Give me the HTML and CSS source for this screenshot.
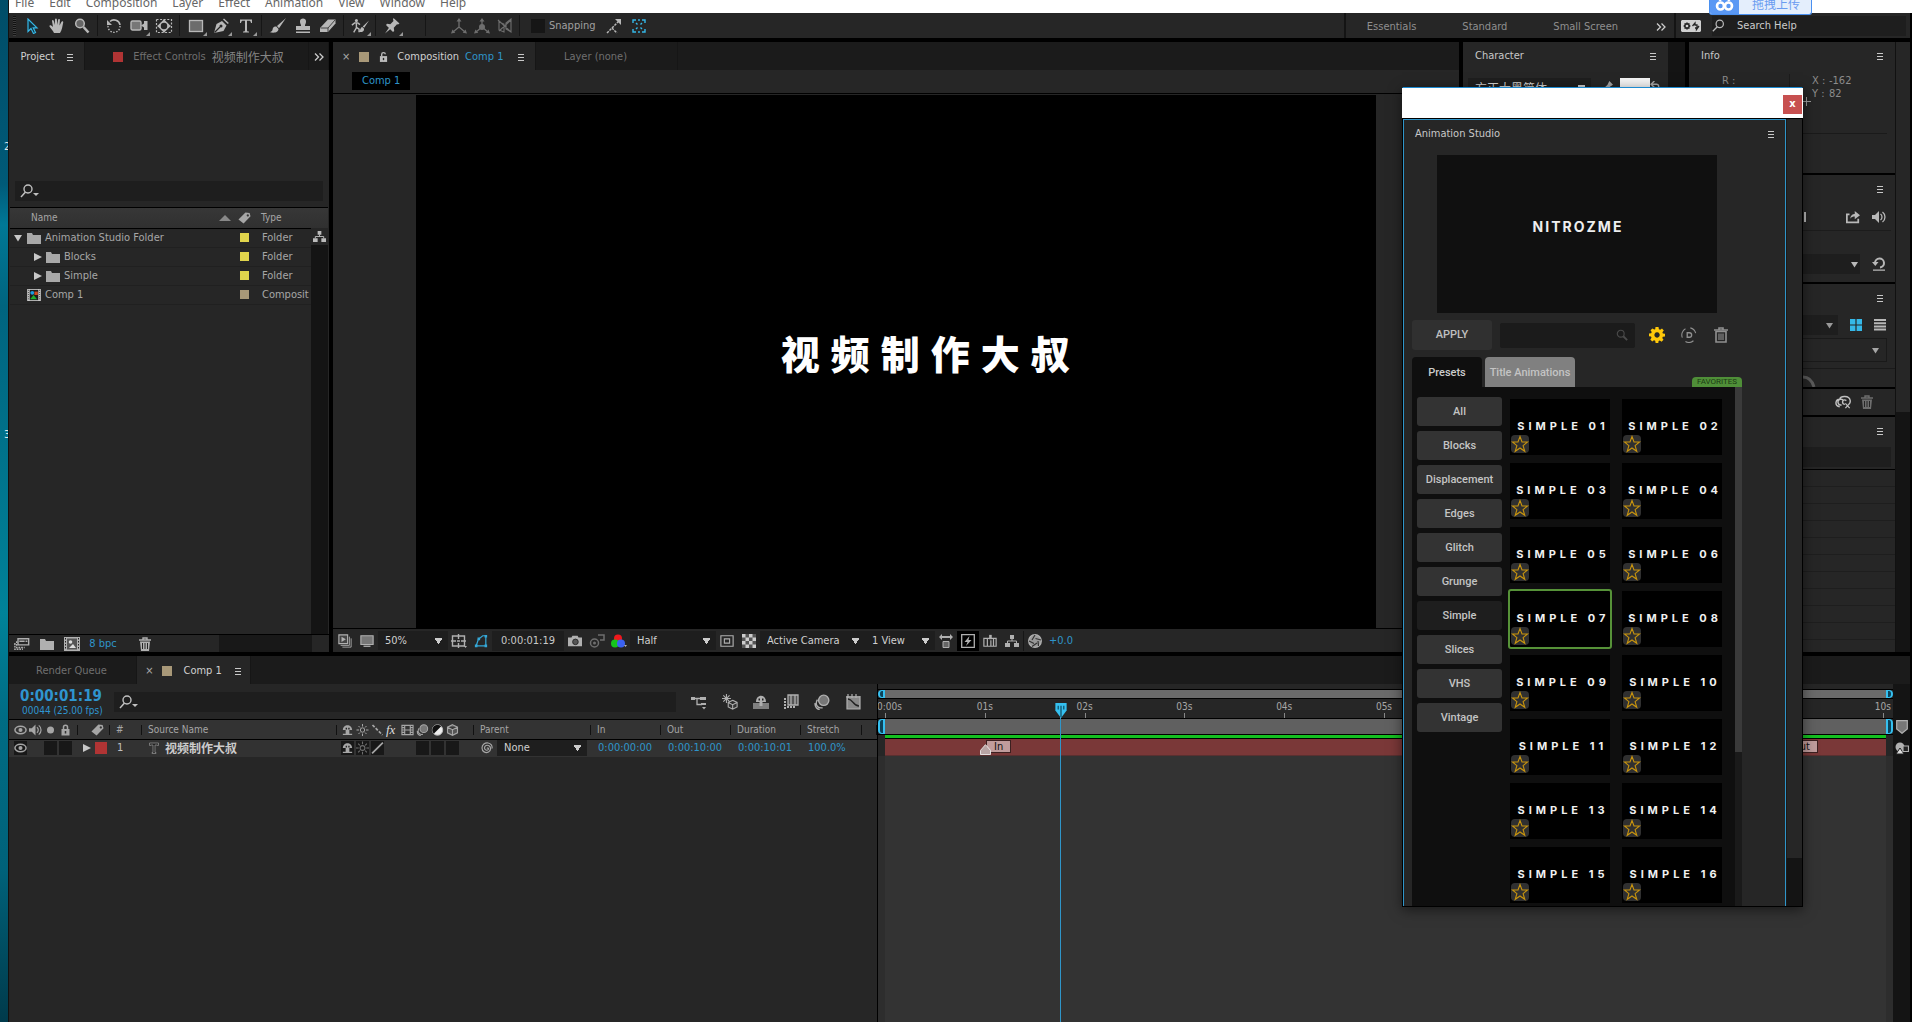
FILE: index.html
```html
<!DOCTYPE html>
<html lang="en">
<head>
    <meta charset="UTF-8">
    <meta name="viewport" content="width=device-width, initial-scale=1.0">
    <title>Composition Editor</title>
    <link rel="stylesheet" href="styles.css">
</head>
<body>
    <!-- Icon sprite -->
    <svg class="sprite" xmlns="http://www.w3.org/2000/svg">
        <symbol id="i-menu" viewBox="0 0 8 8"><path d="M1 1.500h6M1 4.500h6M1 7.500h6" stroke="currentColor" fill="none"/></symbol>
        <symbol id="i-select" viewBox="0 0 16 16"><path d="M4 1v12.500l3-3 2.500 5 2-1-2.300-4.700H13z" fill="#10303c" stroke="#35b8e8" stroke-width="1.200"/></symbol>
        <symbol id="i-hand" viewBox="0 0 16 16"><path d="M5 15c-.5-2-3.500-4.500-4.500-6.500C.3 7 2 6.800 4 9L3 3c0-1.200 1.500-1.200 1.800 0l1 4L6 1.500c.1-1.300 1.800-1.300 1.900 0L8.200 7l.9-5.200c.2-1.200 1.900-1 1.800.3L10.500 7.500l2-3.800c.6-1.100 2-.4 1.700.7C13.500 7.500 13.200 12 11 15z"/></symbol>
        <symbol id="i-zoom" viewBox="0 0 16 16"><circle cx="6" cy="5.500" r="4.300" fill="#666" stroke="currentColor" stroke-width="1.500"/><path d="M9.500 9l5 5.500" stroke="currentColor" stroke-width="2.600"/></symbol>
        <symbol id="i-rotate" viewBox="0 0 16 16"><path d="M4 3.500A6 6 0 0 1 14 7" fill="none" stroke="currentColor" stroke-width="1.600"/><path d="M14 8A6 6 0 1 1 2.500 6" fill="none" stroke="currentColor" stroke-width="1.400" stroke-dasharray="1.500 1.500"/><path d="M1 2v5h5z"/></symbol>
        <symbol id="i-camera" viewBox="0 0 18 14"><rect x="1" y="2" width="10" height="9" rx="1.500" fill="#777" stroke="currentColor" stroke-width="1.400"/><path d="M11 6.500l3-2V2h3.500v9H14V8.500z"/></symbol>
        <symbol id="i-panbehind" viewBox="0 0 18 16"><rect x="1.500" y="1.500" width="15" height="13" fill="none" stroke="currentColor" stroke-width="1.200" stroke-dasharray="2 1.600"/><circle cx="9" cy="8" r="4" fill="none" stroke="currentColor" stroke-width="1.600"/><path d="M9 1l2.500 3h-5zM9 15l2.500-3h-5zM2 8l3-2.500v5zM16 8l-3-2.500v5z"/></symbol>
        <symbol id="i-rect" viewBox="0 0 16 16"><rect x="1.500" y="2.500" width="13" height="11" fill="#6c6c6c" stroke="currentColor" stroke-width="1.300"/></symbol>
        <symbol id="i-pen" viewBox="0 0 16 16"><path d="M1 15l2.500-9L9 3l4.500 4.500-3 5.500z"/><path d="M10 1.500L14.800 6l1-1L11 .5z"/><path d="M1.500 14.500L7 9" stroke="#262626" stroke-width="1.200"/><circle cx="8" cy="8" r="1.500" fill="#262626"/></symbol>
        <symbol id="i-type" viewBox="0 0 16 16"><path d="M2 1.500h12V5h-1c-.2-1.600-.8-2.200-2.400-2.200H9V12c0 1.200.4 1.400 2 1.500v1H5v-1c1.600-.1 2-.3 2-1.500V2.800H5.400C3.800 2.800 3.200 3.400 3 5H2z"/></symbol>
        <symbol id="i-brush" viewBox="0 0 18 16"><path d="M17 0L8 8l2 2.200zM7.300 8.600C5 8 3.500 10 3.500 12 3 13.500 1.500 14 .5 14c4 1.500 9 .5 9-3z"/></symbol>
        <symbol id="i-stamp" viewBox="0 0 16 16"><path d="M6 7C5 5 5 4 5 3.200 5 1.500 6.300.5 8 .5s3 1 3 2.700C11 4 11 5 10 7v1h5v4H1V8h5zM1 13.500h14V15H1z"/></symbol>
        <symbol id="i-eraser" viewBox="0 0 16 16"><path d="M0 10l8-8.500h7.500v4L8 14H0z"/><path d="M.5 10H8l7-8M8 10v4" fill="none" stroke="#444"/></symbol>
        <symbol id="i-roto" viewBox="0 0 20 16"><circle cx="6" cy="2" r="1.700"/><path d="M1 7l3-2.500h3.500l2.500 2M6 5v5l-3 5M6 9.500l3 2V15" fill="none" stroke="currentColor" stroke-width="1.600"/><path d="M20 2l-7 6.500 1.700 1.500zM12.500 9c-2 0-2 4-4 5.500 3 .8 6.500 0 6-3.500z"/></symbol>
        <symbol id="i-pin" viewBox="0 0 16 16"><path d="M9.500 0l6 5.500-1.500 1-1-.3-3.200 3.500.4 3.300-1.200 1L2 7l1-1.200 3.300.4L9.500 3 9 1.500zM5.500 9L7 10.500 1 15.500z"/></symbol>
        <symbol id="i-axis" viewBox="0 0 16 16"><path d="M8 2v7M8 9l-6 5M8 9l6 5" fill="none" stroke="currentColor" stroke-width="1.300"/><path d="M8 0l2.500 3.500h-5zM0 15.500l1.500-4 2.800 3.200zM16 15.500l-1.500-4-2.800 3.200z"/></symbol>
        <symbol id="i-axis2" viewBox="0 0 16 16"><path d="M8 2v7M8 9l-6 5M8 9l6 5" fill="none" stroke="currentColor" stroke-width="1.300"/><path d="M8 0l2.500 3.500h-5zM0 15.500l1.500-4 2.800 3.200zM16 15.500l-1.500-4-2.800 3.200z"/><circle cx="8" cy="9" r="3"/></symbol>
        <symbol id="i-axis3" viewBox="0 0 16 16"><path d="M1 2l13 12M14 1v13L9 11V5zM2 4v8l5 2V6zM14 2L2 13" fill="none" stroke="currentColor" stroke-width="1.100"/></symbol>
        <symbol id="i-snap" viewBox="0 0 16 16"><path d="M1 15l5-5 5 5M6 10l7-7" fill="none" stroke="currentColor" stroke-width="1.500" stroke-dasharray="2.500 1"/><path d="M9 1h6v6z"/></symbol>
        <symbol id="i-snapbox" viewBox="0 0 16 16"><path d="M2 5V2h3M11 2h3v3M14 11v3h-3M5 14H2v-3M5 5l1.500 1.500M11 5L9.500 6.500M5 11l1.500-1.500M11 11L9.500 9.500M8 1v2M8 13v2" fill="none" stroke="#35b8e8" stroke-width="1.400"/></symbol>
        <symbol id="i-chevrons" viewBox="0 0 10 8"><path d="M1 .5L4.500 4 1 7.500M5.500.5L9 4 5.500 7.500" fill="none" stroke="currentColor" stroke-width="1.300"/></symbol>
        <symbol id="i-sync" viewBox="0 0 20 12"><path fill-rule="evenodd" d="M1 0h18l1 1v10l-1 1H1l-1-1V1zM6 2L5 3.300 3.500 3v1.500L2.300 6l1.200 1.500V9L5 8.700 6 10l1-1.300L8.500 9V7.500L9.700 6 8.500 4.500V3L7 3.300z"/><circle cx="6" cy="6" r="1.300"/><path d="M11.500 6l2.500-3v2h2v3M18 6l-2.500 3.500V8H14" fill="none" stroke="#262626" stroke-width="1.300"/></symbol>
        <symbol id="i-search" viewBox="0 0 16 16"><circle cx="9.500" cy="6" r="4.500" fill="none" stroke="currentColor" stroke-width="1.500"/><path d="M6.500 9.500L1 15" stroke="currentColor" stroke-width="1.600"/></symbol>
        <symbol id="i-searchdd" viewBox="0 0 20 14"><circle cx="8" cy="5" r="4" fill="none" stroke="currentColor" stroke-width="1.400"/><path d="M5.500 8L1 13" stroke="currentColor" stroke-width="1.500"/><path d="M13 9h6l-3 3z"/></symbol>
        <symbol id="i-lens" viewBox="0 0 14 14"><circle cx="5.500" cy="5.500" r="4" fill="none" stroke="currentColor" stroke-width="1.300"/><path d="M8.500 8.500L13 13" stroke="currentColor" stroke-width="2.200"/></symbol>
        <symbol id="i-lockopen" viewBox="0 0 10 12"><path d="M1 5h8v6.500H1z"/><path d="M3 5V3c0-2.500 4-2.500 4 0" fill="none" stroke="currentColor" stroke-width="1.500"/><path d="M5 7v2.500" stroke="#262626" stroke-width="1.500"/></symbol>
        <symbol id="i-lock" viewBox="0 0 10 12"><path d="M1 5h8v6.500H1z"/><path d="M3 5V3c0-2.500 4-2.500 4 0v2" fill="none" stroke="currentColor" stroke-width="1.500"/><path d="M5 7v2.500" stroke="#333" stroke-width="1.500"/></symbol>
        <symbol id="i-tag" viewBox="0 0 14 12"><path fill-rule="evenodd" d="M8 0l4.500.5 1 3.500L6 12 .5 7.500zM10.500 2a1.200 1.200 0 1 0 .1 0z"/></symbol>
        <symbol id="i-tridown" viewBox="0 0 8 8"><path d="M0 1h8L4 7.500z"/></symbol>
        <symbol id="i-triright" viewBox="0 0 8 8"><path d="M0 0l8 4-8 4z"/></symbol>
        <symbol id="i-triup" viewBox="0 0 12 6"><path d="M0 6l6-6 6 6z"/></symbol>
        <symbol id="i-folder" viewBox="0 0 14 12"><path d="M0 1h5l1 2h8v9H0z"/></symbol>
        <symbol id="i-comp" viewBox="0 0 16 14"><path d="M0 0h16v14H0z" fill="#c8c8c8"/><path d="M3 1h10v12H3z" fill="#1b1b1b"/><path d="M1.500 1v12M14.500 1v12" stroke="#222" stroke-dasharray="1 1.500"/><circle cx="6" cy="4.500" r="2.300" fill="#1b9be0"/><path d="M8.500 3h4v4h-4z" fill="#cc4a20"/><path d="M3.500 12l4-5 4 5z" fill="#1fae2c"/></symbol>
        <symbol id="i-flow" viewBox="0 0 14 12"><path d="M5 0h4v4H5zM0 8h5v4H0zM9 8h5v4H9z"/><path d="M7 4v2M2.500 8V6h9v2" fill="none" stroke="currentColor"/></symbol>
        <symbol id="i-interpret" viewBox="0 0 18 14"><path d="M4.500 1h12v7h-12zM6 4h6M13 4h2" fill="none" stroke="currentColor" stroke-width="1.600"/><path d="M3 4v7h9M1 6v7h9" fill="none" stroke="currentColor" stroke-width="1.600" stroke-dasharray="2 1"/></symbol>
        <symbol id="i-newcomp" viewBox="0 0 16 14"><path d="M0 0h16v14H0z"/><path d="M3 1.500h10v11H3z" fill="#555"/><path d="M1.500 1v12M14.500 1v12" stroke="#222" stroke-dasharray="1.500 1.500"/><circle cx="6.500" cy="5" r="1.800" fill="#ddd"/><path d="M5 11l4-4 3 4z" fill="#ddd"/></symbol>
        <symbol id="i-trash" viewBox="0 0 12 14"><path d="M0 3h12M4 2.500V1h4v1.500" fill="none" stroke="currentColor" stroke-width="1.400"/><path fill-rule="evenodd" d="M1 4.500h10L10 14H2zM3 6v6h1V6zM5.500 6v6h1V6zM8 6v6h1V6z"/></symbol>
        <symbol id="i-trashbox" viewBox="0 0 14 16"><path d="M0 3h14M5 2.500V1h4v1.500" fill="none" stroke="currentColor" stroke-width="1.600"/><path d="M2 4.500h10V15H2z" fill="none" stroke="currentColor" stroke-width="1.600"/><path d="M5 6.500V13M7 6.500V13M9 6.500V13" stroke="currentColor" stroke-width="1.100"/></symbol>
        <symbol id="i-always" viewBox="0 0 16 16"><path d="M1 1h10v10H1z" fill="#444" stroke="currentColor" stroke-width="1.300"/><path d="M3 13h10V3M5 15h10V5" fill="none" stroke="currentColor"/><path d="M4 3l5 3-5 3z"/></symbol>
        <symbol id="i-monitor" viewBox="0 0 16 14"><path d="M1 1h14v10H1z" fill="#777" stroke="currentColor" stroke-width="1.300"/><path d="M4 13h8" stroke="currentColor" stroke-width="1.500"/></symbol>
        <symbol id="i-guides" viewBox="0 0 16 14"><path d="M1.500 2h12v10h-12zM7.500 0v5M7.500 9v5M0 7h5M10 7h5M6 7h3" fill="none" stroke="currentColor" stroke-width="1.400"/><path d="M13 12h3l-1.500 2z"/></symbol>
        <symbol id="i-mask" viewBox="0 0 16 16"><path d="M2.500 13.500L5 6l5-4h3.500v11.500z" fill="none" stroke="#35a8d8" stroke-width="1.400"/><path d="M1 12h3v3H1zM12 12h3v3h-3zM12 1h3v3h-3zM4 4h3v3H4z" fill="#35a8d8"/></symbol>
        <symbol id="i-photo" viewBox="0 0 16 14"><path d="M0 3h4l1-2h6l1 2h4v10H0z"/><circle cx="8.500" cy="8" r="3.200" fill="#555" stroke="#222"/></symbol>
        <symbol id="i-showsnap" viewBox="0 0 16 14"><circle cx="5.500" cy="9" r="4" fill="none" stroke="currentColor" stroke-width="1.500"/><circle cx="5.500" cy="9" r="1.500"/><path d="M9 1h6v5h-4" fill="none" stroke="currentColor" stroke-width="1.500"/></symbol>
        <symbol id="i-rgb" viewBox="0 0 16 14"><circle cx="7" cy="4.500" r="4" fill="#f0181c"/><circle cx="4" cy="9.500" r="4" fill="#16c41c"/><circle cx="10" cy="9.500" r="4" fill="#3b62f2"/><path d="M13 11h3l-1.500 2z"/></symbol>
        <symbol id="i-roi" viewBox="0 0 16 14"><path d="M1 1h14v12H1zM5 4.500h6v5H5z" fill="none" stroke="currentColor" stroke-width="1.300"/></symbol>
        <symbol id="i-checker" viewBox="0 0 14 14"><path d="M0 0h14v14H0z" fill="#555"/><path d="M0 0h3.500v3.500H0zM7 0h3.500v3.500H7zM3.500 3.500H7V7H3.500zM10.500 3.500H14V7h-3.500zM0 7h3.500v3.500H0zM7 7h3.500v3.500H7zM3.500 10.500H7V14H3.500zM10.500 10.500H14V14h-3.500z" fill="#ccc"/></symbol>
        <symbol id="i-aspect" viewBox="0 0 14 14"><path d="M0 3l3-3v2h8V0l3 3-3 3V4H3v2z"/><path d="M4 7.500h6v6H4z" fill="#666" stroke="currentColor"/></symbol>
        <symbol id="i-fast" viewBox="0 0 14 14"><path d="M.7.7h12.600v12.600H.7z" fill="none" stroke="currentColor" stroke-width="1.300"/><path d="M8.500 2L3.500 8h3L5 12l5.500-6h-3z"/></symbol>
        <symbol id="i-timeline" viewBox="0 0 16 14"><path d="M1 4h14v9H1zM5 4v9M9 6v7M12 4v9" fill="none" stroke="currentColor" stroke-width="1.400"/><path d="M7 0h3v5H7z"/></symbol>
        <symbol id="i-aperture" viewBox="0 0 14 14"><circle cx="7" cy="7" r="6.300" fill="#999" stroke="currentColor" stroke-width="1.300"/><path d="M7 1L4 6M13 6L7.500 4.500M10.500 12L10 7M4 12.500L9 9M1 7l5 2.500" stroke="#333" stroke-width="1.200"/></symbol>
        <symbol id="i-eye" viewBox="0 0 14 10"><ellipse cx="7" cy="5" rx="6" ry="4" fill="none" stroke="currentColor" stroke-width="1.600"/><circle cx="7" cy="5" r="2.200"/></symbol>
        <symbol id="i-speaker" viewBox="0 0 14 12"><path d="M0 4h3l4-4v12L3 8H0z"/><path d="M8.500 3c2 1.500 2 4.500 0 6M10.500 1c3.300 2.500 3.300 7.500 0 10" fill="none" stroke="currentColor" stroke-width="1.300"/></symbol>
        <symbol id="i-dot" viewBox="0 0 8 8"><circle cx="4" cy="4" r="3.500"/></symbol>
        <symbol id="i-shy" viewBox="0 0 14 12"><path d="M2 6C2-1 12-1 12 6H9v4h3v1.500H2V10h3V6z"/><path d="M5 3.500h1.500v2H5zM7.800 3.500h1.500v2H7.800z" fill="#222"/></symbol>
        <symbol id="i-sun" viewBox="0 0 12 12"><circle cx="6" cy="6" r="2.200" fill="none" stroke="currentColor"/><path d="M6 0v2.500M6 9.500V12M0 6h2.500M9.500 6H12M2 2l1.500 1.500M8.500 8.500L10 10M10 2L8.500 3.500M3.500 8.500L2 10" stroke="currentColor"/></symbol>
        <symbol id="i-quality" viewBox="0 0 12 12"><path d="M1 1l10 10" stroke="currentColor" stroke-width="1.700" stroke-dasharray="3 1.500"/></symbol>
        <symbol id="i-slash" viewBox="0 0 12 12"><path d="M1 11L11 1" stroke="currentColor" stroke-width="1.600"/></symbol>
        <symbol id="i-film" viewBox="0 0 14 12"><path d="M1 1h12v10H1zM4 1v10M10 1v10M4 6h6M1 3.500h3M1 6h3M1 8.500h3M10 3.500h3M10 6h3M10 8.500h3" fill="none" stroke="currentColor" stroke-width="1.200"/></symbol>
        <symbol id="i-blur" viewBox="0 0 14 14"><circle cx="8.500" cy="5.500" r="4.500" fill="#777" stroke="currentColor" stroke-width="1.200"/><path d="M3 5C.5 9 3 13 7.500 12M1 8c-.5 3.500 2 5.500 4 5.500" fill="none" stroke="currentColor" stroke-width="1.200"/></symbol>
        <symbol id="i-adjust" viewBox="0 0 12 12"><circle cx="6" cy="6" r="5.200" fill="#eee" stroke="#bbb"/><path d="M2.300 9.700A5.200 5.200 0 0 1 9.700 2.300z" fill="#111"/></symbol>
        <symbol id="i-cube" viewBox="0 0 12 12"><path d="M6 .7l5 2.500v5.600l-5 2.500-5-2.500V3.200zM1 3.200l5 2.500 5-2.500M6 5.700v5.600" fill="#555" stroke="currentColor" stroke-width="1.100"/></symbol>
        <symbol id="i-swirl" viewBox="0 0 12 12"><path d="M6 6.500c.8-1.300 2 0 1.200 1C6 9 3.500 8 3.500 6 3.500 3.500 6 2.700 8 3.700c2.300 1.300 2 5-.5 6.300C4.500 11.500 1 9.500 1 6 1 2.500 4 .7 7 1c3 .3 4.500 3 4 5.500" fill="none" stroke="currentColor" stroke-width="1.200"/></symbol>
        <symbol id="i-branch" viewBox="0 0 16 16"><path d="M0 3h4v3H0zM9 3h6v3H9zM10 9h5v2h-5z"/><path d="M3 4.500h6M6 4.500v6h5" fill="none" stroke="currentColor" stroke-width="1.300"/><path d="M11 13h4l-2 2.500z"/></symbol>
        <symbol id="i-draft3d" viewBox="0 0 18 18"><path d="M5 0v10M0 5h10M1.500 1.500l7 7M8.500 1.500l-7 7" stroke="currentColor" stroke-width="1.200"/><path d="M12 7l5 2.500v5L12 17l-5-2.500v-5zM7 9.500l5 2.500 5-2.500M12 12v5" fill="#333" stroke="currentColor" stroke-width="1.200"/></symbol>
        <symbol id="i-hideshy" viewBox="0 0 16 16"><path d="M0 9h16v6H0z" fill="#808080"/><path d="M3 8C3-.5 13-.5 13 8H9.500v4h-3V8z"/><path d="M5.500 4.500h1.500v2H5.500zM9 4.500h1.500v2H9z" fill="#222"/></symbol>
        <symbol id="i-frames" viewBox="0 0 16 16"><path d="M5 1h10v10H5zM8 1v10M12 1v10" fill="#555" stroke="currentColor" stroke-width="1.300"/><path d="M2 4v11M4 13h8" fill="none" stroke="currentColor" stroke-width="2" stroke-dasharray="2 1"/></symbol>
        <symbol id="i-graph" viewBox="0 0 16 16"><path d="M2 2h13v13H2z" fill="#888"/><path d="M1 3h14M3 0v4M7 0v4M11 0v4M2 2v13h13V2" fill="none" stroke="currentColor" stroke-width="1.200"/><path d="M3 5c5 0 5 7 11 7" fill="none" stroke="#222" stroke-width="1.300"/></symbol>
        <symbol id="i-text" viewBox="0 0 10 12"><path d="M.5 1h9v2.500h-1V3H6v7.500h1v1H3v-1h1V3H1.500v.5h-1z" fill="#222" stroke="#8a8a8a" stroke-width=".8"/></symbol>
        <symbol id="i-share" viewBox="0 0 16 14"><path d="M4 4H1v9h13V9" fill="none" stroke="currentColor" stroke-width="2"/><path d="M5 9c0-4 3-5.500 5-5.500V0l6 5-6 4.500V6.500C8 6.500 6 7 5 9z"/></symbol>
        <symbol id="i-reset" viewBox="0 0 14 14"><path d="M3 6a4.500 4.500 0 1 1 5 4.500" fill="none" stroke="currentColor" stroke-width="2"/><path d="M0 5h6.500L3.300 9zM1 12.500h12v1.300H1z"/></symbol>
        <symbol id="i-grid" viewBox="0 0 12 12"><path d="M0 0h5.400v5.400H0zM6.600 0H12v5.400H6.600zM0 6.600h5.400V12H0zM6.600 6.600H12V12H6.600z"/></symbol>
        <symbol id="i-list" viewBox="0 0 12 12"><path d="M0 0h12v2H0zM0 3.200h12v2H0zM0 6.400h12v2H0zM0 9.600h12v2H0z"/></symbol>
        <symbol id="i-swirlx" viewBox="0 0 18 14"><path d="M9 6a3 3 0 1 0-2 4M5 12C-1 11 .5 4 5 4c1-4 10-4 11 1 .5 2 0 3-1 4M12 5.500C10 4 8 5 8 7c0 1.500 1 2.500 2.500 2.500" fill="none" stroke="currentColor" stroke-width="1.500"/><path d="M11 8.500l4.500 5M15.500 8.500l-4.500 5" stroke="currentColor" stroke-width="1.300"/></symbol>
        <symbol id="i-gear" viewBox="0 0 16 16"><path fill-rule="evenodd" d="M6.500 0h3l.4 2.200 1.300.5L13 1.500 14.800 3.400 13.400 5.200l.5 1.300L16 6.800v2.600l-2.200.4-.5 1.200 1.200 1.800-1.900 1.900-1.800-1.300-1.200.5L9.300 16H6.600l-.4-2.200-1.200-.5-1.800 1.200-1.900-1.900 1.200-1.800L2 9.600 0 9.200V6.600l2.200-.4.5-1.200L1.500 3.200l1.900-1.800 1.800 1.200 1-.4zM8 5.300a2.700 2.700 0 1 0 .1 0z"/></symbol>
        <symbol id="i-dcircle" viewBox="0 0 18 18"><path d="M10.500 1A8 8 0 0 1 16.500 7M1.500 12A8 8 0 0 1 5 2M5 16.300a8 8 0 0 0 9-.8" fill="none" stroke="currentColor" stroke-width="1.200"/><path d="M7 6.500h2.500c3.300 0 3.300 5 0 5H7z" fill="none" stroke="currentColor" stroke-width="1.500"/></symbol>
        <symbol id="i-star" viewBox="0 0 18 18"><path d="M9 1.500l2 5.500h5.500l-4.400 3.600 1.700 5.700L9 13l-4.800 3.300 1.700-5.700L1.500 7H7z" fill="none" stroke="#c8940e" stroke-width="1.100"/></symbol>
        <symbol id="i-dropper" viewBox="0 0 12 12"><path d="M8 0l4 4-3 2L3 12l-3 0 1-3 5-5z"/></symbol>
        <symbol id="i-swap" viewBox="0 0 10 10"><path d="M1 3h5c2 0 2 1 2 6M4 0L1 3l3 3" fill="none" stroke="currentColor" stroke-width="1.300"/></symbol>
        <symbol id="i-cross" viewBox="0 0 10 10"><path d="M5 0v10M0 5h10" stroke="currentColor"/></symbol>
        <symbol id="i-step" viewBox="0 0 10 10"><path d="M0 5l5-4v8zM7 0h2v10H7z"/></symbol>
        <symbol id="i-shield" viewBox="0 0 12 14"><path d="M.7.7h10.600V9L6 13.300.7 9z" fill="#777" stroke="currentColor" stroke-width="1.200"/></symbol>
        <symbol id="i-bin" viewBox="0 0 14 12"><circle cx="5" cy="5" r="4.500"/><path d="M1 12l4-6 4 6z" fill="#ddd" stroke="#222"/><path d="M8 4h5.500v5.500H8z" fill="#222" stroke="currentColor" stroke-width="1.200"/></symbol>
        <symbol id="i-arc" viewBox="0 0 14 12"><path d="M0 2c5 0 9 3 11 10" fill="none" stroke="currentColor" stroke-width="3"/></symbol>
        <symbol id="i-head" viewBox="0 0 12 16"><path d="M0 0h12v8l-6 8-6-8z" fill="#35c0f0"/><path d="M3 3v4M6 3v12M9 3v4" stroke="#0c4258" stroke-width="1.200"/></symbol>
        <symbol id="i-marker" viewBox="0 0 12 12"><path d="M.5 11.500V7L6 .7 11.500 7v4.500z" fill="#b8a4a4" stroke="#eee"/></symbol>
        <symbol id="i-cloud" viewBox="0 0 20 16"><circle cx="6" cy="8" r="3.500" fill="none" stroke="#fff" stroke-width="2.600"/><circle cx="14" cy="8" r="3.500" fill="none" stroke="#fff" stroke-width="2.600"/><path d="M5 3a6 6 0 0 1 10 0" fill="none" stroke="#fff" stroke-width="2"/></symbol>
    </svg>

    <aside class="desktop"><span>2</span><span>3</span></aside>

    <div class="app">
        <nav class="menubar">
            <a href="#">File</a><a href="#">Edit</a><a href="#">Composition</a><a href="#">Layer</a><a href="#">Effect</a><a href="#">Animation</a><a href="#">View</a><a href="#">Window</a><a href="#">Help</a>
        </nav>

        <header class="toolbar">
            <span class="grip"></span>
            <button class="tool" aria-label="Selection"><svg><use href="#i-select"/></svg></button>
            <button class="tool" aria-label="Hand"><svg><use href="#i-hand"/></svg></button>
            <button class="tool" aria-label="Zoom"><svg><use href="#i-zoom"/></svg></button>
            <i class="sep"></i>
            <button class="tool" aria-label="Rotate"><svg><use href="#i-rotate"/></svg></button>
            <button class="tool more wide-icon" aria-label="Camera"><svg><use href="#i-camera"/></svg></button>
            <button class="tool wide-icon" aria-label="Pan behind"><svg><use href="#i-panbehind"/></svg></button>
            <i class="sep"></i>
            <button class="tool more" aria-label="Shape"><svg><use href="#i-rect"/></svg></button>
            <button class="tool more" aria-label="Pen"><svg><use href="#i-pen"/></svg></button>
            <button class="tool more" aria-label="Type"><svg><use href="#i-type"/></svg></button>
            <i class="sep"></i>
            <button class="tool wide-icon" aria-label="Brush"><svg><use href="#i-brush"/></svg></button>
            <button class="tool" aria-label="Clone"><svg><use href="#i-stamp"/></svg></button>
            <button class="tool" aria-label="Eraser"><svg><use href="#i-eraser"/></svg></button>
            <i class="sep"></i>
            <button class="tool more wide-icon" aria-label="Roto brush"><svg><use href="#i-roto"/></svg></button>
            <i class="sep"></i>
            <button class="tool more" aria-label="Puppet pin"><svg><use href="#i-pin"/></svg></button>
            <i class="sep wide"></i>
            <button class="tool dim" aria-label="Local axis"><svg><use href="#i-axis"/></svg></button>
            <button class="tool dim" aria-label="World axis"><svg><use href="#i-axis2"/></svg></button>
            <button class="tool dim" aria-label="View axis"><svg><use href="#i-axis3"/></svg></button>
            <i class="sep"></i>
            <label class="snapping"><input type="checkbox"> Snapping</label>
            <button class="tool" aria-label="Snap edges"><svg><use href="#i-snap"/></svg></button>
            <button class="tool" aria-label="Snap features"><svg><use href="#i-snapbox"/></svg></button>
            <div class="workspaces">
                <button>Essentials</button>
                <button>Standard</button>
                <button>Small Screen</button>
                <button class="more-ws" aria-label="More workspaces"><svg><use href="#i-chevrons"/></svg></button>
            </div>
            <button class="sync" aria-label="Sync settings"><svg><use href="#i-sync"/></svg></button>
            <label class="help"><svg><use href="#i-search"/></svg><input type="text" placeholder="Search Help"></label>
        </header>

        <main class="panels">
            <section class="panel project">
                <div class="tabs">
                    <button class="tab active">Project <svg class="menu"><use href="#i-menu"/></svg></button>
                    <button class="tab effects"><i class="chip red"></i>Effect Controls <span class="cjk">视频制作大叔</span></button>
                    <button class="tab chevrons" aria-label="More tabs"><svg><use href="#i-chevrons"/></svg></button>
                </div>
                <div class="project-space"></div>
                <label class="searchbox"><svg><use href="#i-searchdd"/></svg><input type="text" aria-label="Search project"></label>
                <div class="project-list">
                    <table>
                        <thead>
                            <tr><th class="c-name">Name <svg><use href="#i-triup"/></svg></th><th class="c-tag"><svg><use href="#i-tag"/></svg></th><th class="c-type">Type</th></tr>
                        </thead>
                        <tbody>
                            <tr><td class="lvl0"><svg class="tri"><use href="#i-tridown"/></svg><svg class="fold"><use href="#i-folder"/></svg>Animation Studio Folder</td><td><i class="label yellow"></i></td><td>Folder</td></tr>
                            <tr><td class="lvl1"><svg class="tri"><use href="#i-triright"/></svg><svg class="fold"><use href="#i-folder"/></svg>Blocks</td><td><i class="label yellow"></i></td><td>Folder</td></tr>
                            <tr><td class="lvl1"><svg class="tri"><use href="#i-triright"/></svg><svg class="fold"><use href="#i-folder"/></svg>Simple</td><td><i class="label yellow"></i></td><td>Folder</td></tr>
                            <tr><td class="lvl0"><i class="tri"></i><svg class="fold"><use href="#i-comp"/></svg>Comp 1</td><td><i class="label tan"></i></td><td>Composit</td></tr>
                        </tbody>
                    </table>
                    <div class="vscroll"><svg><use href="#i-flow"/></svg></div>
                </div>
                <div class="project-foot">
                    <button aria-label="Interpret footage"><svg class="big"><use href="#i-interpret"/></svg></button>
                    <button aria-label="New folder"><svg><use href="#i-folder"/></svg></button>
                    <button aria-label="New composition"><svg class="big"><use href="#i-newcomp"/></svg></button>
                    <button class="bpc">8 bpc</button>
                    <button aria-label="Delete"><svg><use href="#i-trash"/></svg></button>
                    <div class="hscroll"><i></i></div>
                </div>
            </section>

            <section class="panel comp">
                <div class="tabs">
                    <button class="tab active comp-tab"><span class="x">×</span><i class="chip tan"></i><svg class="lock"><use href="#i-lockopen"/></svg>Composition <b>Comp 1</b><svg class="menu"><use href="#i-menu"/></svg></button>
                    <button class="tab layer-tab">Layer (none)</button>
                </div>
                <div class="crumbs"><a href="#">Comp 1</a></div>
                <div class="viewer">
                    <div class="canvas"><p class="title-layer">视频制作大叔</p></div>
                </div>
                <div class="viewer-foot">
                    <button aria-label="Always preview"><svg><use href="#i-always"/></svg></button>
                    <button aria-label="Primary viewer"><svg><use href="#i-monitor"/></svg></button>
                    <select class="s-mag" aria-label="Magnification"><option>50%</option></select>
                    <button aria-label="Guides"><svg class="big"><use href="#i-guides"/></svg></button>
                    <button aria-label="Masks"><svg><use href="#i-mask"/></svg></button>
                    <button class="timecode">0:00:01:19</button>
                    <button aria-label="Snapshot"><svg><use href="#i-photo"/></svg></button>
                    <button class="dim" aria-label="Show snapshot"><svg class="big"><use href="#i-showsnap"/></svg></button>
                    <button aria-label="Channels"><svg class="big"><use href="#i-rgb"/></svg></button>
                    <select class="s-res" aria-label="Resolution"><option>Half</option></select>
                    <button aria-label="Region"><svg><use href="#i-roi"/></svg></button>
                    <button aria-label="Transparency grid"><svg><use href="#i-checker"/></svg></button>
                    <select class="s-cam" aria-label="Camera"><option>Active Camera</option></select>
                    <select class="s-view" aria-label="Views"><option>1 View</option></select>
                    <button aria-label="Pixel aspect"><svg><use href="#i-aspect"/></svg></button>
                    <button class="pressed" aria-label="Fast previews"><svg><use href="#i-fast"/></svg></button>
                    <button aria-label="Timeline"><svg><use href="#i-timeline"/></svg></button>
                    <button aria-label="Flowchart"><svg><use href="#i-flow"/></svg></button>
                    <button class="exposure" aria-label="Exposure"><svg><use href="#i-aperture"/></svg></button>
                    <span class="blue">+0.0</span>
                </div>
            </section>

            <section class="side character">
                <div class="panel">
                    <div class="panel-title">Character <svg class="menu"><use href="#i-menu"/></svg></div>
                    <div class="font-row">
                        <select class="cjk" aria-label="Font"><option>方正大黑简体</option></select>
                        <svg><use href="#i-dropper"/></svg><i class="swatch"></i><svg><use href="#i-swap"/></svg>
                    </div>
                </div>
                <div class="track"></div>
            </section>

            <section class="side right">
                <div class="stack">
                    <div class="panel info">
                        <div class="panel-title">Info <svg class="menu"><use href="#i-menu"/></svg></div>
                        <div class="info-grid">
                            <span class="rgb">R :</span>
                            <dl><dt>X :</dt><dd>-162</dd><dt>Y :</dt><dd>82</dd></dl>
                        </div>
                        <svg class="cross"><use href="#i-cross"/></svg>
                    </div>
                    <div class="panel preview">
                        <div class="panel-title"><svg class="menu"><use href="#i-menu"/></svg></div>
                        <div class="line-row transport"><svg><use href="#i-step"/></svg><svg class="push"><use href="#i-share"/></svg><svg><use href="#i-speaker"/></svg></div>
                        <div class="line-row"><span class="drop"><svg><use href="#i-tridown"/></svg></span><svg><use href="#i-reset"/></svg></div>
                    </div>
                    <div class="panel presets">
                        <div class="panel-title"><svg class="menu"><use href="#i-menu"/></svg></div>
                        <div class="line-row views"><span class="drop"><svg><use href="#i-tridown"/></svg></span><svg class="on"><use href="#i-grid"/></svg><svg><use href="#i-list"/></svg></div>
                        <div class="boxed"><svg><use href="#i-tridown"/></svg></div>
                        <div class="arc-row"><svg><use href="#i-arc"/></svg></div>
                    </div>
                    <div class="panel buttons"><svg><use href="#i-swirlx"/></svg><svg class="dim"><use href="#i-trash"/></svg></div>
                    <div class="panel effects-list">
                        <div class="panel-title"><svg class="menu"><use href="#i-menu"/></svg></div>
                        <input type="text" aria-label="Search effects">
                        <div class="lines"></div>
                    </div>
                </div>
                <div class="track"><i></i></div>
            </section>
        </main>

        <section class="timeline">
            <div class="tabs">
                <button class="tab queue-tab">Render Queue</button>
                <button class="tab active time-tab"><span class="x">×</span><i class="chip tan"></i>Comp 1 <svg class="menu"><use href="#i-menu"/></svg></button>
            </div>
            <div class="time-body">
                <div class="layers">
                    <div class="time-tools">
                        <div class="clock"><strong>0:00:01:19</strong><small>00044 (25.00 fps)</small></div>
                        <label class="searchbox"><svg><use href="#i-searchdd"/></svg><input type="text" aria-label="Search layers"></label>
                        <div class="switches">
                            <svg><use href="#i-branch"/></svg><svg><use href="#i-draft3d"/></svg><svg><use href="#i-hideshy"/></svg><svg><use href="#i-frames"/></svg><svg><use href="#i-blur"/></svg><svg><use href="#i-graph"/></svg>
                        </div>
                    </div>
                    <table class="layer-table">
                        <colgroup><col class="w-av"><col class="w-tag"><col class="w-num"><col class="w-name"><col class="w-sw"><col class="w-parent"><col class="w-time"><col class="w-time"><col class="w-time"><col class="w-stretch"><col></colgroup>
                        <thead>
                            <tr>
                                <th><div class="cells"><svg><use href="#i-eye"/></svg><svg><use href="#i-speaker"/></svg><svg class="small"><use href="#i-dot"/></svg><svg><use href="#i-lock"/></svg></div></th>
                                <th class="right"><svg><use href="#i-tag"/></svg></th><th>#</th><th>Source Name</th>
                                <th><div class="cells"><svg><use href="#i-shy"/></svg><svg><use href="#i-sun"/></svg><svg><use href="#i-quality"/></svg><em>fx</em><svg><use href="#i-film"/></svg><svg><use href="#i-blur"/></svg><svg><use href="#i-adjust"/></svg><svg><use href="#i-cube"/></svg></div></th>
                                <th>Parent</th><th>In</th><th>Out</th><th>Duration</th><th>Stretch</th><th></th>
                            </tr>
                        </thead>
                        <tbody>
                            <tr>
                                <td><div class="cells"><svg class="well"><use href="#i-eye"/></svg><i></i><i class="well"></i><i class="well"></i></div></td>
                                <td class="right"><div class="twirl"><svg class="tri"><use href="#i-triright"/></svg><i class="label red"></i></div></td><td class="num">1</td>
                                <td class="layer-name"><svg><use href="#i-text"/></svg><span class="cjk">视频制作大叔</span></td>
                                <td><div class="cells"><svg class="well"><use href="#i-shy"/></svg><svg class="well dim"><use href="#i-sun"/></svg><svg class="well"><use href="#i-slash"/></svg><i></i><i></i><i class="well"></i><i class="well"></i><i class="well"></i></div></td>
                                <td class="parent"><svg><use href="#i-swirl"/></svg><select aria-label="Parent"><option>None</option></select></td>
                                <td class="blue">0:00:00:00</td><td class="blue">0:00:10:00</td><td class="blue">0:00:10:01</td><td class="blue">100.0%</td><td></td>
                            </tr>
                        </tbody>
                    </table>
                </div>
                <div class="graph">
                    <div class="navigator"><i class="handle"></i><i class="bar"></i><i class="handle end"></i></div>
                    <div class="ruler"><span>0:00s</span><span>01s</span><span>02s</span><span>03s</span><span>04s</span><span>05s</span><span>06s</span><span>07s</span><span>08s</span><span>09s</span><span>10s</span></div>
                    <div class="workarea"><i class="handle"></i><i class="bar"></i><i class="handle end"></i></div>
                    <div class="cached"></div>
                    <div class="layer-bar"></div>
                    <div class="rest"></div>
                    <div class="overlay">
                        <div class="marker m-in"><svg><use href="#i-marker"/></svg><span>In</span></div>
                        <div class="marker m-out"><svg><use href="#i-marker"/></svg><span>Out</span></div>
                        <div class="playhead"><svg><use href="#i-head"/></svg></div>
                    </div>
                </div>
                <div class="gutter"><svg><use href="#i-shield"/></svg><svg><use href="#i-bin"/></svg></div>
            </div>
        </section>
    </div>

    <div class="upload"><svg><use href="#i-cloud"/></svg><span class="cjk">拖拽上传</span></div>

    <!-- Floating Animation Studio window -->
    <div class="studio">
        <div class="studio-bar"><button aria-label="Close">x</button></div>
        <div class="studio-body">
            <div class="studio-main">
                <div class="panel-title">Animation Studio <svg class="menu"><use href="#i-menu"/></svg></div>
                <div class="brand">NITROZME</div>
                <div class="controls">
                    <button class="apply">APPLY</button>
                    <label class="find"><input type="text" aria-label="Search presets"><svg><use href="#i-lens"/></svg></label>
                    <button class="tool gear" aria-label="Settings"><svg><use href="#i-gear"/></svg></button>
                    <button class="tool" aria-label="Duration"><svg><use href="#i-dcircle"/></svg></button>
                    <button class="tool" aria-label="Remove"><svg><use href="#i-trashbox"/></svg></button>
                </div>
                <div class="studio-tabs">
                    <button class="on">Presets</button>
                    <button>Title Animations</button>
                    <button class="fav">FAVORITES</button>
                </div>
                <div class="library">
                    <div class="cats">
                        <button>All</button>
                        <button>Blocks</button>
                        <button>Displacement</button>
                        <button>Edges</button>
                        <button>Glitch</button>
                        <button>Grunge</button>
                        <button class="on">Simple</button>
                        <button>Slices</button>
                        <button>VHS</button>
                        <button>Vintage</button>
                    </div>
                    <div class="cards">
                        <div class="card">SIMPLE 01<svg><use href="#i-star"/></svg></div>
                        <div class="card">SIMPLE 02<svg><use href="#i-star"/></svg></div>
                        <div class="card">SIMPLE 03<svg><use href="#i-star"/></svg></div>
                        <div class="card">SIMPLE 04<svg><use href="#i-star"/></svg></div>
                        <div class="card">SIMPLE 05<svg><use href="#i-star"/></svg></div>
                        <div class="card">SIMPLE 06<svg><use href="#i-star"/></svg></div>
                        <div class="card picked">SIMPLE 07<svg><use href="#i-star"/></svg></div>
                        <div class="card">SIMPLE 08<svg><use href="#i-star"/></svg></div>
                        <div class="card">SIMPLE 09<svg><use href="#i-star"/></svg></div>
                        <div class="card">SIMPLE 10<svg><use href="#i-star"/></svg></div>
                        <div class="card">SIMPLE 11<svg><use href="#i-star"/></svg></div>
                        <div class="card">SIMPLE 12<svg><use href="#i-star"/></svg></div>
                        <div class="card">SIMPLE 13<svg><use href="#i-star"/></svg></div>
                        <div class="card">SIMPLE 14<svg><use href="#i-star"/></svg></div>
                        <div class="card">SIMPLE 15<svg><use href="#i-star"/></svg></div>
                        <div class="card">SIMPLE 16<svg><use href="#i-star"/></svg></div>
                    </div>
                    <div class="lib-scroll"><i></i></div>
                </div>
            </div>
            <div class="studio-scroll"><i></i></div>
        </div>
    </div>
</body>
</html>
```
FILE: styles.css
```css
* {
    box-sizing: border-box;
}
body {
    margin: 0;
    height: 100vh;
    overflow: hidden;
    display: flex;
    position: relative;
    background: #000;
    color: #a6a6a6;
    font-family: "DejaVu Sans Condensed", "Noto Sans", "Noto Sans CJK SC", sans-serif;
    font-size: 11px;
    line-height: 14px;
}
button, input, select {
    font: inherit;
    color: inherit;
    background: none;
    border: 0;
    padding: 0;
    margin: 0;
    outline: none;
}
button {
    display: flex;
    align-items: center;
    justify-content: center;
    white-space: nowrap;
}
a {
    color: inherit;
    text-decoration: none;
}
i {
    display: block;
    font-style: normal;
}
svg {
    display: block;
    width: 14px;
    height: 14px;
    flex: none;
    fill: currentColor;
}
select {
    appearance: none;
    height: 19px;
    padding-left: 7px;
    color: #d0d0d0;
    background: #1e1e1e conic-gradient(from -34deg at 50% 100%, #ccc 0 68deg, transparent 0) no-repeat;
    background-size: 9px 6px;
    background-position: right 5px center;
}
.sprite {
    position: absolute;
    width: 0;
    height: 0;
}
.cjk {
    font-family: "Noto Sans CJK SC", sans-serif;
}
.blue {
    color: #2f95c9;
}
.dim {
    color: #6e6e6e;
}
.big {
    width: 16px;
}

/* Desktop edge */
.desktop {
    width: 9px;
    flex: none;
    padding-top: 140px;
    overflow: hidden;
    display: flex;
    flex-direction: column;
    align-items: flex-start;
    padding-left: 4px;
    gap: 274px;
    color: #dfe8ea;
    border-right: 1px solid #111;
    background: linear-gradient(#004d68, #005a78 18%, #007896 22%, #00647f 30%, #008299 60%, #006c84 70%, #00627a 85%, #003a4b);
}
.app {
    flex: 1;
    min-width: 0;
    padding-right: 2px;
    display: grid;
    grid-template-rows: 13px 25px minmax(0, 1fr) 366px;
    grid-template-columns: minmax(0, 1fr);
}

/* Menu and tools */
.menubar {
    background: #fff;
    color: #666;
    font-family: "Noto Sans", sans-serif;
    font-size: 12px;
    line-height: 14px;
    display: flex;
    align-items: flex-end;
    gap: 15px;
    padding: 0 0 3px 6px;
    overflow: hidden;
    margin-right: -2px;
}
.toolbar {
    background: #262626;
    display: flex;
    align-items: center;
    color: #b8b8b8;
    min-width: 0;
}
.grip {
    width: 3px;
    height: 20px;
    margin: 0 3px 0 4px;
    background: repeating-linear-gradient(#111 0 1px, #3c3c3c 1px 2px);
}
.tool {
    width: 25px;
    height: 23px;
    position: relative;
}
.tool svg {
    width: 16px;
    height: 16px;
}
.wide-icon svg {
    width: 18px;
}
.tool.more::after {
    content: "";
    position: absolute;
    right: 1px;
    bottom: 1px;
    border: 2px solid transparent;
    border-right-color: #999;
    border-bottom-color: #999;
}
.tool.dim {
    width: 23px;
}
.sep {
    width: 1px;
    height: 21px;
    margin: 0 3px;
    background: #161616;
}
.sep.wide {
    margin: 0 21px;
}
.snapping {
    display: flex;
    align-items: center;
    gap: 4px;
    margin: 0 6px 0 8px;
    color: #a0a0a0;
}
.snapping input {
    appearance: none;
    width: 14px;
    height: 14px;
    background: #161616;
}
.workspaces {
    margin-left: auto;
    height: 25px;
    display: flex;
    align-items: center;
    gap: 46px;
    padding: 2px 8px 0 21px;
    border-left: 2px solid #141414;
    border-right: 2px solid #141414;
    color: #8f8f8f;
}
.more-ws svg {
    width: 10px;
    height: 8px;
    color: #ccc;
}
.more-ws {
    margin-left: -8px;
}
.sync {
    margin: 0 11px 0 5px;
    color: #d0d0d0;
}
.sync svg {
    width: 20px;
    height: 12px;
}
.help {
    width: 194px;
    height: 20px;
    background: #1e1e1e;
    margin-right: 4px;
    display: flex;
    align-items: center;
    gap: 12px;
}
.help svg {
    width: 13px;
    height: 13px;
}
.help input {
    width: 150px;
}
.help input::placeholder {
    color: #ccc;
    opacity: 1;
}

/* Panels */
.panels {
    margin: 4px 0;
    display: grid;
    grid-template-columns: 320px minmax(0, 1fr) 222px 221px;
    grid-template-rows: minmax(0, 1fr);
    gap: 4px;
    min-height: 0;
}
.panel {
    background: #262626;
    min-width: 0;
}
.tabs {
    height: 28px;
    background: #1b1b1b;
    display: flex;
    flex: none;
}
.tab {
    color: #6f6f6f;
    padding-top: 2px;
    border-right: 1px solid #161616;
}
.tab.active {
    background: #262626;
    color: #d0d0d0;
}
.menu {
    width: 8px;
    height: 8px;
    color: #c8c8c8;
}
.chip {
    width: 10px;
    height: 10px;
}
.red {
    background: #b03434;
}
.tan {
    background: #a89878;
}
.yellow {
    background: #e0d44c;
}
.x {
    font-size: 11px;
    color: #aaa;
}
.project, .comp {
    display: flex;
    flex-direction: column;
    min-height: 0;
}
.project .tab.active {
    width: 76px;
    gap: 12px;
    padding-left: 2px;
}
.effects {
    flex: 1;
    gap: 6px;
    padding-left: 4px;
}
.effects .chip {
    margin-right: 4px;
}
.effects .cjk {
    font-size: 12px;
    color: #858585;
}
.chevrons {
    width: 20px;
    color: #ccc;
}
.chevrons svg {
    width: 10px;
    height: 8px;
}
.project-space {
    height: 111px;
}
.searchbox {
    height: 20px;
    margin: 0 6px;
    padding-left: 5px;
    background: #1e1e1e;
    display: flex;
    align-items: center;
    color: #c0c0c0;
}
.searchbox svg {
    width: 20px;
}
.searchbox input {
    width: 100%;
}
.project-list {
    flex: 1;
    margin: 6px 1px 0;
    border-top: 1px solid #000;
    display: flex;
    position: relative;
    overflow: hidden;
}
table {
    border-collapse: collapse;
    table-layout: fixed;
}
.project-list table {
    width: 318px;
    height: 96px;
    flex: none;
}
th {
    font-weight: normal;
    text-align: left;
    padding: 0;
    white-space: nowrap;
}
td {
    padding: 0;
    white-space: nowrap;
}
.project-list th {
    height: 20px;
    background: linear-gradient(#373737, #303030);
    border-bottom: 1px solid #000;
    font-size: 10px;
}
.project-list td {
    height: 19px;
    border-bottom: 1px solid #202020;
}
.c-name {
    width: 224px;
}
.project-list .c-name {
    padding-left: 21px;
}
.c-name svg {
    float: right;
    width: 12px;
    height: 6px;
    margin: 4px 3px 0 0;
    color: #888;
}
.c-tag {
    width: 21px;
}
.c-tag svg, .layer-table th.right svg {
    width: 13px;
    height: 12px;
    margin: 0 auto;
}
.project-list .c-type {
    padding-left: 6px;
}
.project-list td:last-child {
    padding-left: 7px;
}
.project-list td svg, .project-list td .tri {
    display: inline-block;
    vertical-align: middle;
}
.tri {
    width: 8px;
    height: 8px;
    color: #c8c8c8;
}
.lvl0 .tri {
    margin: 0 5px 0 4px;
}
.lvl1 .tri {
    margin: 0 4px 0 24px;
}
.fold {
    width: 14px;
    height: 12px;
    margin-right: 4px;
    color: #a8a8a8;
}
.label {
    width: 9px;
    height: 9px;
    margin: 0 auto;
}
.vscroll {
    position: absolute;
    right: 0;
    top: 20px;
    bottom: 0;
    width: 17px;
    background: #141414;
}
.vscroll svg {
    width: 17px;
    height: 17px;
    padding: 2px;
    background: #262626;
    color: #bbb;
}
.project-foot {
    height: 18px;
    border-top: 1px solid #000;
    display: flex;
    align-items: center;
    color: #b0b0b0;
}
.project-foot button {
    width: 25px;
}
.project-foot .bpc {
    width: 48px;
    color: #2f95c9;
    padding-right: 10px;
}
.hscroll {
    flex: 1;
    height: 17px;
    margin-left: 4px;
    margin-right: 17px;
    background: #181818;
}
.hscroll i {
    width: 58px;
    height: 17px;
    background: #262626;
}

/* Composition viewer */
.comp-tab {
    width: 203px;
    justify-content: flex-start;
    padding-left: 9px;
}
.comp-tab .chip {
    margin: 0 10px 0 9px;
}
.comp-tab .lock {
    width: 9px;
    height: 12px;
    margin-right: 9px;
    color: #bbb;
}
.comp-tab b {
    font-weight: normal;
    color: #2f95c9;
    margin: 0 14px 0 6px;
}
.layer-tab {
    width: 142px;
    padding-right: 22px;
}
.crumbs {
    height: 24px;
    padding: 2px 19px 0;
    border-bottom: 1px solid #000;
}
.crumbs a {
    display: inline-block;
    background: #000;
    color: #2f95c9;
    line-height: 18px;
    padding: 0 10px;
}
.viewer {
    flex: 1;
    padding-top: 1px;
    display: flex;
    justify-content: center;
    min-height: 0;
    border-bottom: 1px solid #000;
}
.canvas {
    width: 960px;
    background: #000;
    position: relative;
}
.title-layer {
    position: absolute;
    left: 38%;
    top: 45%;
    margin: 0;
    color: #fff;
    font: 900 39px/34px "Noto Sans CJK SC", sans-serif;
    letter-spacing: 11px;
    white-space: nowrap;
}
.viewer-foot {
    height: 23px;
    padding-left: 1px;
    display: flex;
    align-items: center;
    color: #b0b0b0;
}
.viewer-foot button {
    width: 22px;
    height: 20px;
    flex: none;
}
.viewer-foot .dim {
    color: #6e6e6e;
}
.viewer-foot .timecode {
    width: 72px;
    background: #1e1e1e;
    color: #c8c8c8;
}
.viewer-foot .pressed {
    background: #000;
}
.viewer-foot .exposure {
    border-left: 1px solid #161616;
    margin-right: 4px;
}
.s-mag {
    width: 70px;
}
.s-res {
    width: 86px;
}
.s-cam {
    width: 105px;
}
.s-view {
    width: 70px;
}

/* Right hand columns */
.side {
    display: flex;
    min-width: 0;
    min-height: 0;
}
.panel-title {
    height: 28px;
    padding: 0 11px 0 12px;
    display: flex;
    align-items: center;
    justify-content: space-between;
    color: #c8c8c8;
}
.panel-title .menu {
    margin-left: auto;
}
.character .panel {
    width: 205px;
}
.track {
    flex: 1;
    background: #141414;
}
.font-row {
    display: flex;
    align-items: flex-start;
    padding: 8px 5px;
}
.font-row select {
    width: 123px;
    font-size: 12px;
}
.font-row svg {
    width: 11px;
    height: 11px;
    margin: 3px 0 0 11px;
}
.font-row .swatch {
    width: 30px;
    height: 22px;
    margin-left: 7px;
    background: #f4f4f4;
}
.font-row svg:last-child {
    margin-left: 0;
}
.stack {
    width: 206px;
    flex: none;
    display: flex;
    flex-direction: column;
    gap: 2px;
}
.right .track {
    border-left: 1px solid #111;
}
.right .track i {
    height: 370px;
    background: #262626;
}
.info {
    height: 131px;
    position: relative;
}
.info-grid {
    display: flex;
    height: 64px;
    margin-right: 8px;
    padding: 4px 0 0 33px;
    border-bottom: 1px solid #1a1a1a;
    color: #8c8c8c;
}
.rgb {
    width: 68px;
    height: 40px;
    border-right: 1px solid #1c1c1c;
}
dl {
    display: grid;
    grid-template-columns: 17px auto;
    grid-auto-rows: 13px;
    line-height: 13px;
    margin: 0 0 0 22px;
}
dd {
    margin: 0;
}
.cross {
    position: absolute;
    left: 113px;
    top: 55px;
    width: 9px;
    height: 9px;
}
.preview {
    height: 107px;
}
.line-row {
    display: flex;
    align-items: center;
    justify-content: flex-end;
    gap: 12px;
    height: 28px;
    margin: 0 4px;
    padding-right: 5px;
    color: #b8b8b8;
}
.transport {
    border-bottom: 1px solid #1c1c1c;
    margin-bottom: 19px;
    padding-left: 104px;
}
.transport svg:first-child {
    width: 10px;
    height: 10px;
}
.push {
    margin-left: auto;
}
.drop {
    flex: 1;
    height: 20px;
    background: #1e1e1e;
    display: flex;
    align-items: center;
    justify-content: flex-end;
    padding-right: 1px;
}
.line-row .drop svg, .boxed svg {
    width: 9px;
    height: 7px;
}
.presets {
    height: 103px;
}
.views {
    height: 26px;
}
.views .drop {
    padding-right: 4px;
    color: #999;
}
.views svg {
    width: 12px;
    height: 12px;
}
.views .on {
    color: #35b8e8;
}
.boxed {
    height: 24px;
    margin: 0 8px 0 4px;
    border: 1px solid #1a1a1a;
    display: flex;
    align-items: center;
    justify-content: flex-end;
    padding-right: 6px;
}
.arc-row {
    margin-top: 6px;
    padding: 6px 0 0 114px;
    border-top: 1px solid #1a1a1a;
    color: #5c5c5c;
}
.arc-row svg {
    width: 14px;
    height: 12px;
}
.buttons {
    height: 26px;
    display: flex;
    align-items: center;
    justify-content: flex-end;
    gap: 8px;
    padding-right: 21px;
    color: #c0c0c0;
}
.buttons svg:first-child {
    width: 17px;
}
.effects-list {
    flex: 1;
    display: flex;
    flex-direction: column;
}
.effects-list input {
    height: 20px;
    margin: 2px 4px;
    background: #1e1e1e;
}
.lines {
    flex: 1;
    border-top: 1px solid #000;
    background: repeating-linear-gradient(transparent 0 16px, #1e1e1e 16px 17px);
}

/* Timeline */
.timeline {
    display: flex;
    flex-direction: column;
    min-height: 0;
    position: relative;
    background: #262626;
}
.queue-tab {
    width: 128px;
    padding-right: 2px;
}
.time-tab {
    width: 114px;
}
.time-tab .chip {
    margin: 0 11px 0 9px;
}
.time-tab .menu {
    margin-left: 12px;
}
.time-body {
    flex: 1;
    display: flex;
    min-height: 0;
}
.layers {
    width: 868px;
    flex: none;
}
.time-tools {
    height: 35px;
    display: flex;
    align-items: center;
}
.clock {
    width: 99px;
    padding-left: 11px;
    color: #2f95d0;
}
.clock strong {
    display: block;
    font-size: 15px;
    line-height: 18px;
}
.clock small {
    display: block;
    font-size: 10px;
    line-height: 12px;
    padding-left: 2px;
    white-space: nowrap;
}
.time-tools .searchbox {
    width: 562px;
}
.switches {
    flex: 1;
    display: flex;
    justify-content: space-between;
    padding: 0 16px 0 9px;
    color: #b0b0b0;
}
.switches svg {
    width: 16px;
    height: 16px;
}
.layer-table {
    width: 100%;
    border-top: 1px solid #000;
}
.w-av {
    width: 69px;
}
.w-tag, .w-num {
    width: 32px;
}
.w-name {
    width: 195px;
}
.w-sw {
    width: 137px;
}
.w-parent {
    width: 117px;
}
.w-time {
    width: 70px;
}
.w-stretch {
    width: 61px;
}
.layer-table th {
    height: 20px;
    padding: 1px 0 0 6px;
    font-size: 10px;
    background: linear-gradient(90deg, transparent calc(100% - 1px), #111 0) center / 100% 10px no-repeat, #333;
    border-bottom: 1px solid #000;
}
.layer-table td {
    height: 17px;
    padding-left: 7px;
    background: #323232;
}
.layer-table th:first-child, .layer-table td:first-child {
    padding-left: 5px;
}
.layer-table td:nth-child(5), .layer-table th:nth-child(5) {
    padding-left: 4px;
}
.layer-table td.right {
    padding-left: 5px;
}
.twirl {
    display: flex;
    align-items: center;
    gap: 4px;
}
.twirl .label {
    width: 12px;
    height: 12px;
    margin: 0;
}
.cells {
    display: flex;
    align-items: center;
    gap: 2px;
}
.cells svg, .cells i, .cells em {
    width: 13px;
    height: 12px;
}
.cells em {
    font: italic 13px/12px "Liberation Serif", serif;
    color: #ddd;
}
.cells .small {
    height: 8px;
}
.cells .well {
    height: 14px;
    background: #181818;
}
.num {
    color: #c0c0c0;
}
.layer-name {
    color: #ccc;
}
.layer-name svg, .parent svg {
    display: inline-block;
    vertical-align: middle;
    width: 10px;
    height: 12px;
    margin-right: 6px;
}
.layer-name .cjk {
    font-size: 12px;
    font-weight: bold;
    line-height: 16px;
    vertical-align: middle;
}
.parent svg {
    width: 12px;
    margin-right: 4px;
}
.parent select {
    width: 90px;
    height: 16px;
    vertical-align: middle;
}

/* Time graph */
.graph {
    flex: 1;
    min-width: 0;
    position: relative;
    isolation: isolate;
    padding-top: 5px;
    border-left: 1px solid #000;
    display: flex;
    flex-direction: column;
}
.navigator, .workarea {
    display: flex;
    height: 10px;
    border-top: 1px solid #000;
    border-bottom: 1px solid #000;
}
.workarea {
    height: 17px;
}
.bar {
    flex: 1;
    background: #6a6a6a;
}
.workarea .bar {
    background: #606060;
}
.handle {
    width: 7px;
    border: 1px solid #35c0f0;
    border-width: 1px 2px;
    border-radius: 4px 0 0 4px;
    background: #0c4258;
}
.handle.end {
    border-radius: 0 4px 4px 0;
}
.ruler {
    height: 19px;
    padding-left: 7px;
    display: flex;
    overflow: hidden;
    font-size: 10px;
    line-height: 16px;
}
.ruler span {
    width: 9.900%;
    flex: none;
    text-indent: -8px;
    background: linear-gradient(#888, #888) 0 100% / 1px 5px no-repeat;
}
.cached {
    height: 4px;
    margin: 0 7px;
    background: #14c020;
    border-bottom: 1px solid #000;
}
.layer-bar {
    height: 17px;
    margin: 0 7px;
    background: #7a3838;
    border-bottom: 1px solid #5a3030;
}
.rest {
    flex: 1;
    border: 0 solid #2d2d2d;
    border-width: 0 7px;
    background: #333;
}
.overlay {
    position: absolute;
    inset: 0 7px;
}
.playhead {
    position: absolute;
    left: 17.500%;
    top: 19px;
    bottom: 0;
    width: 1px;
    background: #2f95c9;
}
.playhead svg {
    width: 12px;
    height: 15px;
    margin-left: -5px;
}
.marker {
    position: absolute;
    top: 56px;
    display: flex;
    align-items: flex-end;
}
.marker svg {
    width: 11px;
    height: 11px;
    margin: 0 -5px -2px 0;
    z-index: 1;
}
.marker span {
    height: 13px;
    line-height: 11px;
    padding: 0 7px;
    font-size: 11px;
    background: #c09c9c;
    border: 1px solid #3c2020;
    color: #111;
}
.m-in {
    left: 9.500%;
}
.m-out {
    right: 6.800%;
}
.gutter {
    width: 17px;
    background: #141414;
    padding: 36px 1px 0 2px;
    color: #b0b0b0;
}
.gutter svg {
    margin-bottom: 7px;
}

/* Upload badge */
.upload {
    position: absolute;
    right: 100px;
    top: 0;
    width: 103px;
    height: 15px;
    display: flex;
    align-items: flex-end;
    overflow: hidden;
    background: #e4eefc;
    border: 1px solid #4a90f0;
    border-top: 0;
    border-radius: 0 0 3px 3px;
    color: #6a9cf0;
}
.upload svg {
    width: 29px;
    height: 16px;
    background: #5a98f4;
}
.upload span {
    margin-left: 13px;
    font-size: 12px;
    line-height: 20px;
}

/* Animation Studio window */
.studio {
    position: absolute;
    z-index: 2;
    right: 109px;
    top: 87px;
    width: 401px;
    height: 820px;
    display: flex;
    flex-direction: column;
    background: #262626;
    border: 1px solid #000;
    border-top: 1px solid #1c8ad0;
    box-shadow: 0 3px 12px rgba(0, 0, 0, .5);
}
.studio-bar {
    height: 30px;
    margin: 0 -1px;
    background: #fff;
    display: flex;
    justify-content: flex-end;
    padding: 7px 1px 0 0;
}
.studio-bar button {
    width: 19px;
    height: 19px;
    padding-bottom: 2px;
    background: #c75050;
    color: #fff;
    font-weight: bold;
}
.studio-body {
    flex: 1;
    display: flex;
    min-height: 0;
    border-top: 1px solid #000;
}
.studio-main {
    flex: 1;
    min-width: 0;
    display: flex;
    flex-direction: column;
    border: 1px solid #2f95c9;
    border-bottom: 0;
}
.studio-main .panel-title {
    padding: 0 10px 0 11px;
}
.studio-scroll {
    width: 16px;
    background: #141414;
    border-left: 1px solid #1a1a1a;
}
.studio-scroll i {
    height: 739px;
    background: #262626;
}
.brand {
    width: 280px;
    height: 158px;
    flex: none;
    margin: 7px 0 7px 33px;
    background: #101010;
    color: #eee;
    display: flex;
    align-items: center;
    justify-content: center;
    padding: 0 0 14px 2px;
    font: bold 14px/20px "Inter", sans-serif;
    letter-spacing: 2px;
}
.controls, .studio-tabs, .cats {
    font-family: "Roboto", sans-serif;
    font-size: 11px;
    font-weight: 500;
}
.controls {
    height: 30px;
    margin-left: 8px;
    display: flex;
    align-items: center;
    color: #909090;
}
.apply {
    width: 80px;
    height: 30px;
    background: #303030;
    border-radius: 3px;
    color: #c0c0c0;
}
.find {
    width: 135px;
    height: 25px;
    margin: 0 6px 0 8px;
    padding-right: 7px;
    display: flex;
    align-items: center;
    background: #1b1b1b;
    border-radius: 2px;
    color: #4a4a4a;
}
.find input {
    flex: 1;
    min-width: 0;
}
.find svg {
    width: 12px;
    height: 12px;
}
.controls .tool {
    width: 32px;
}
.gear {
    color: #ffc80a;
}
.studio-tabs {
    height: 30px;
    margin: 7px 43px 0 8px;
    display: flex;
    gap: 3px;
}
.studio-tabs button {
    width: 90px;
    padding-top: 1px;
    background: #808080;
    color: #c4c4c4;
    border-radius: 4px 4px 0 0;
}
.studio-tabs .on {
    width: 70px;
    background: #0f0f0f;
    color: #ccc;
}
.studio-tabs .fav {
    width: 50px;
    height: 10px;
    margin: 20px 0 0 auto;
    padding: 0;
    background: #4f8f38;
    color: #1c3a14;
    font-size: 8px;
    font-weight: normal;
    line-height: 10px;
}
.library {
    flex: 1;
    min-height: 0;
    margin: 0 43px 0 8px;
    display: flex;
    background: #0f0f0f;
    overflow: hidden;
}
.cats {
    width: 85px;
    margin: 10px 8px 0 5px;
    display: flex;
    flex-direction: column;
    gap: 5px;
}
.cats button {
    height: 29px;
    padding-top: 1px;
    background: #333;
    border-radius: 3px;
    color: #c4c4c4;
}
.cats .on {
    background: #1e1e1e;
}
.cards {
    display: grid;
    grid-template-columns: 100px 100px;
    grid-auto-rows: 56px;
    gap: 8px 12px;
    padding-top: 12px;
    align-content: start;
}
.card {
    position: relative;
    background: #000;
    color: #f0f0f0;
    text-align: center;
    padding-left: 6px;
    font: bold 11px/54px "Inter", sans-serif;
    letter-spacing: 4px;
    white-space: nowrap;
}
.card svg {
    position: absolute;
    left: 1px;
    bottom: 2px;
    width: 18px;
    height: 18px;
    background: #303030;
    border-radius: 4px;
}
.picked {
    outline: 2px solid #569238;
    border-radius: 1px;
}
.lib-scroll {
    width: 7px;
    margin-left: auto;
    background: #1a1a1a;
}
.lib-scroll i {
    height: 365px;
    background: #3a3a3a;
}
```
